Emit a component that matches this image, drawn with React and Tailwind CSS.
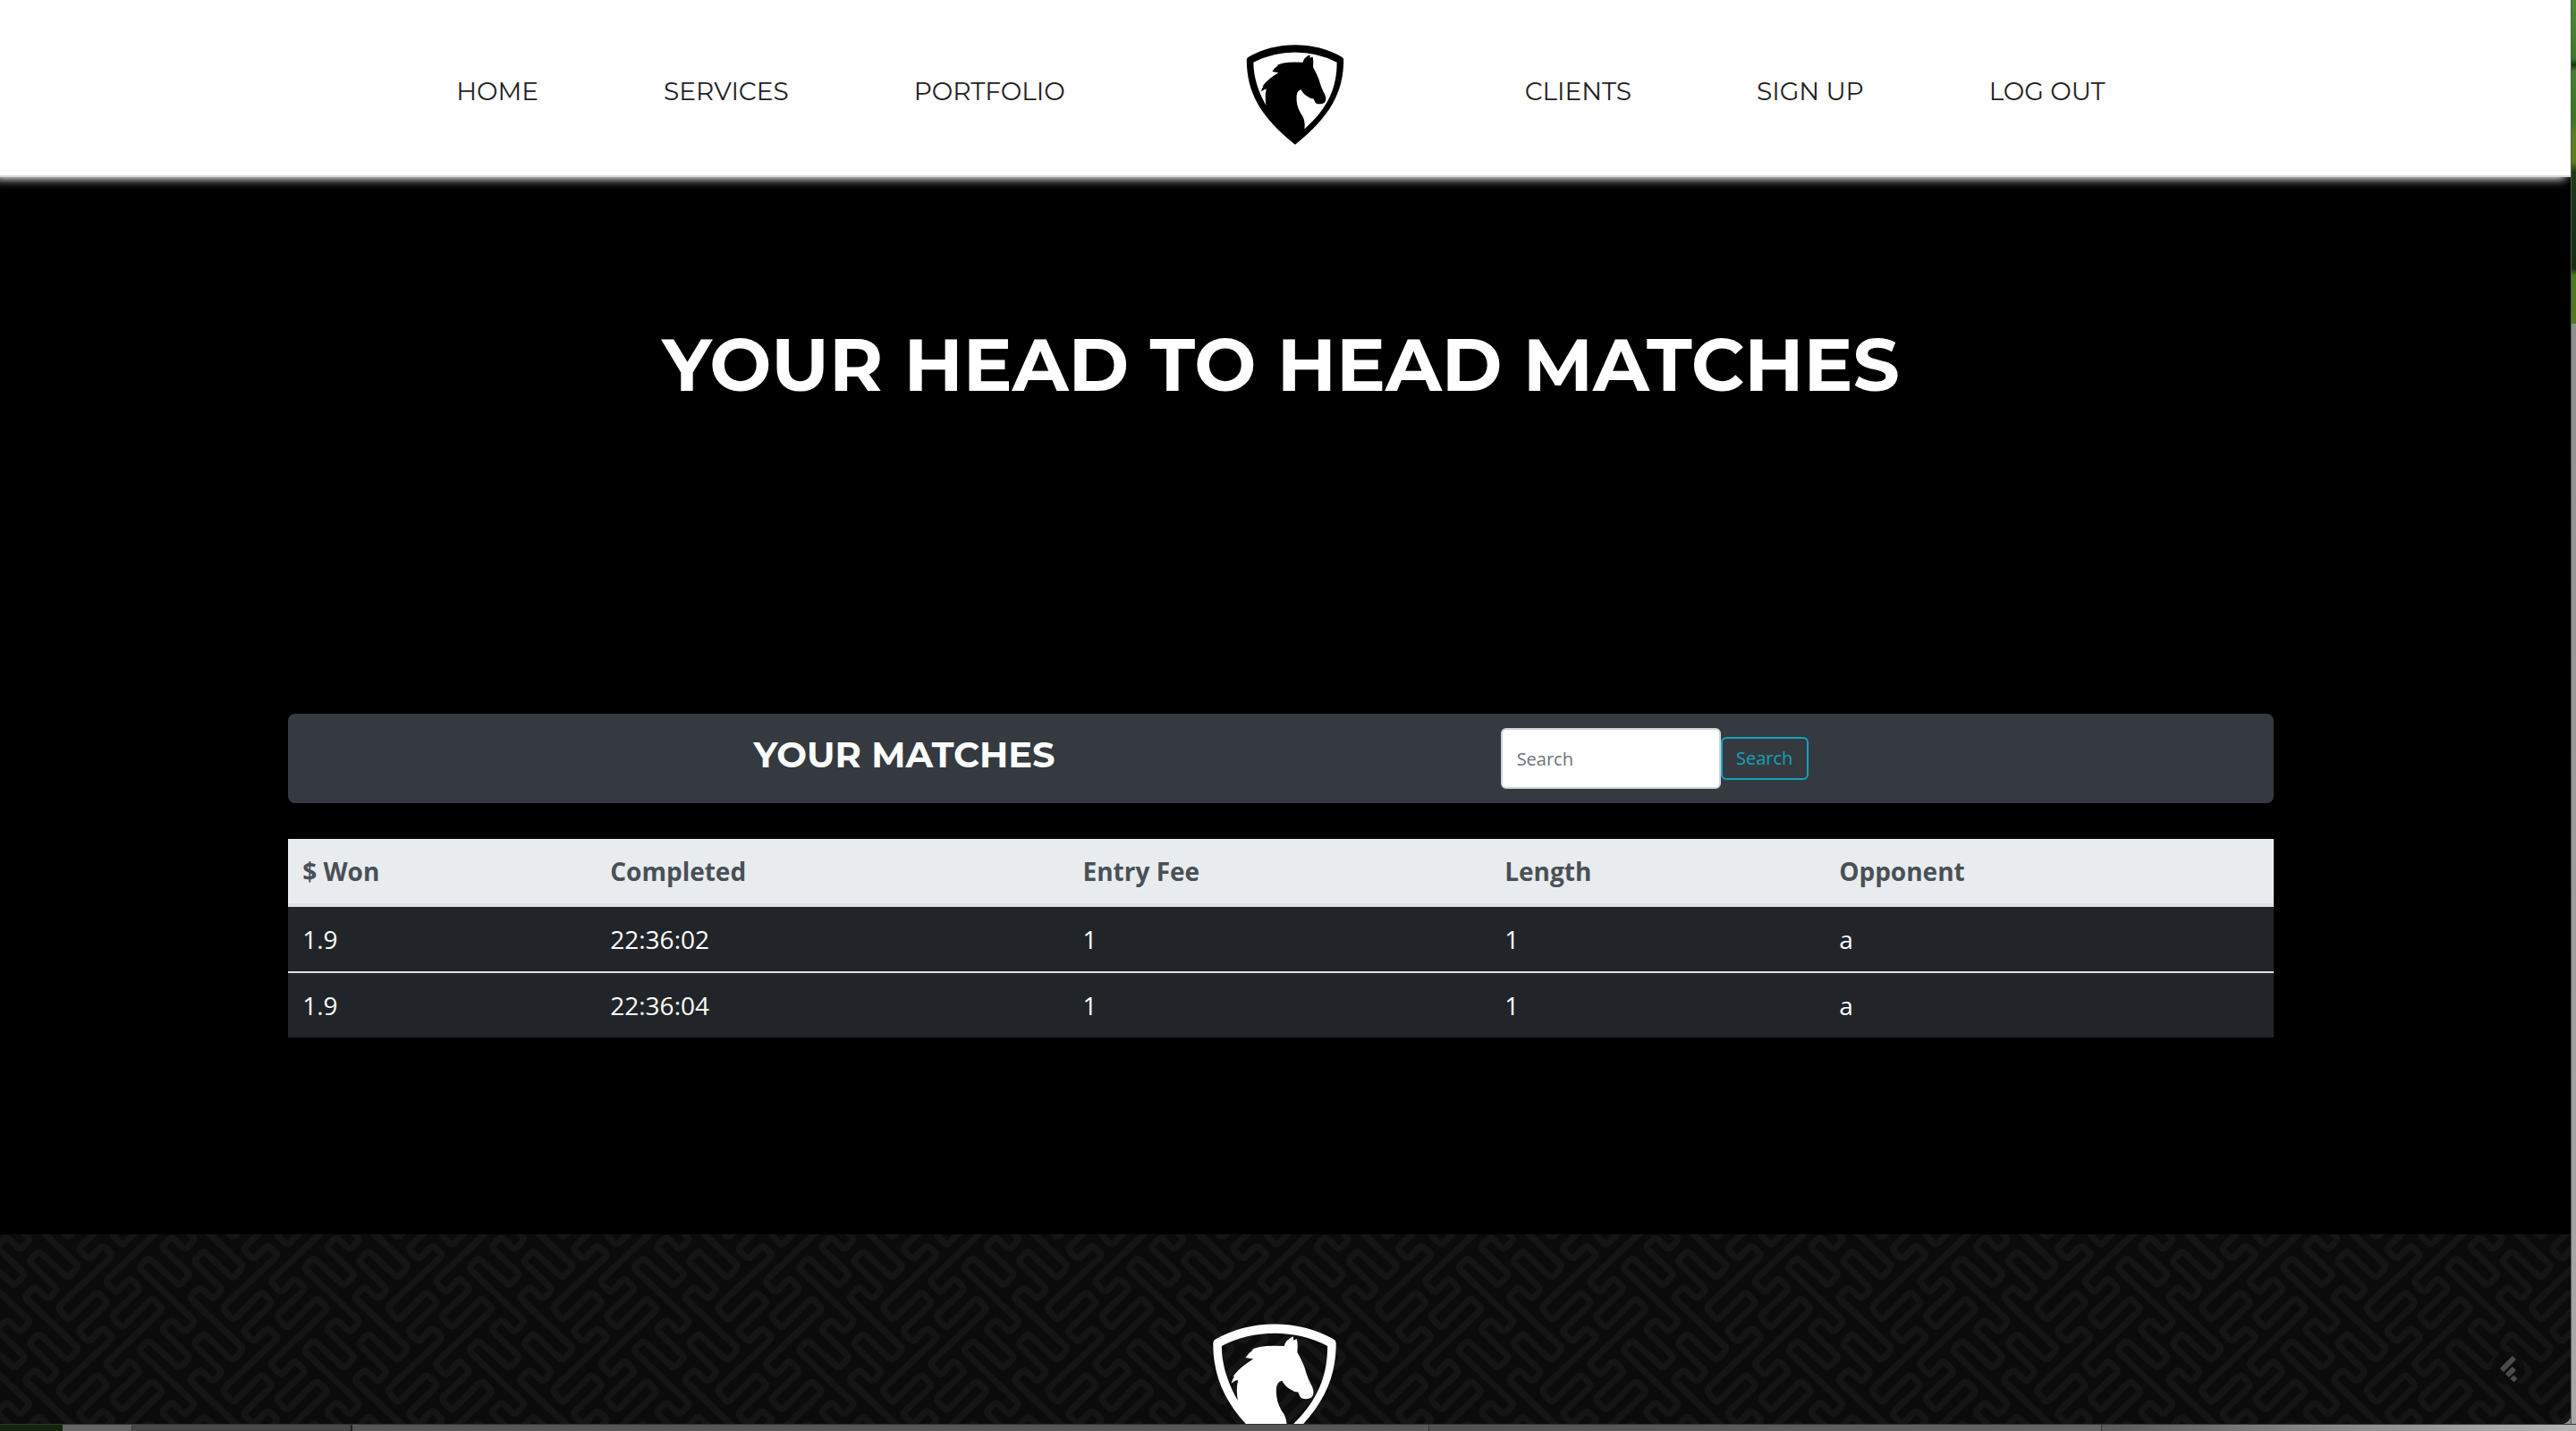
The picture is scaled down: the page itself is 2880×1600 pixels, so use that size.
import React from "react";

const LEFT_LINKS = ["HOME", "SERVICES", "PORTFOLIO"];
const RIGHT_LINKS = ["CLIENTS", "SIGN UP", "LOG OUT"];

const COLUMNS = [
  { label: "$ Won", key: "won", width: "w-[15.5%]" },
  { label: "Completed", key: "completed", width: "w-[23.8%]" },
  { label: "Entry Fee", key: "fee", width: "w-[21.25%]" },
  { label: "Length", key: "length", width: "w-[16.85%]" },
  { label: "Opponent", key: "opponent", width: "w-[22.6%]" },
];

const MATCHES = [
  { won: "1.9", completed: "22:36:02", fee: "1", length: "1", opponent: "a" },
  { won: "1.9", completed: "22:36:04", fee: "1", length: "1", opponent: "a" },
];

function HorseShield({ className }) {
  return (
    <svg viewBox="66 56 330 341" className={className} fill="currentColor" aria-hidden="true">
      <path
        fillRule="evenodd"
        d="M66 108Q66 101 72 98Q144 57 231 57Q318 57 390 98Q396 101 396 108C396 215 352 300 231 396C110 300 66 215 66 108Z
           M263 343C345 270 373 200 373 116Q307 82 231 82Q155 82 89 116C89 170 108 220 132 262Q127 232 133 207L125 209L115 216Q119 202 124 197L119 199Q134 175 174 151L153 147Q162 133 174 126L168 127Q188 112 257 116Q259 100 281 90L282 101L290 97Q294 105 292 133Q302 150 311 172Q320 205 332 225Q340 245 330 254Q318 261 303 256Q298 252 294 240Q284 240 275 233Q260 226 251 209Q238 212 236 228Q233 262 250 290Q267 310 263 343Z"
      />
    </svg>
  );
}

/* Builds a smooth path through corner points, rounding each corner. */
function roundedPath(points, radius) {
  const toward = (from, to) => {
    const length = Math.hypot(to[0] - from[0], to[1] - from[1]);
    const t = Math.min(radius, length / 2) / length;
    return [from[0] + (to[0] - from[0]) * t, from[1] + (to[1] - from[1]) * t];
  };
  let d = `M${points[0]}`;
  for (let i = 1; i < points.length - 1; i += 1) {
    d += `L${toward(points[i], points[i - 1])}Q${points[i]} ${toward(points[i], points[i + 1])}`;
  }
  return `${d}L${points[points.length - 1]}`;
}

const SNAKES = [
  [[90, -60], [264, 107], [228, 148], [130, 55], [96, 90], [193, 185], [162, 219], [117, 176], [81, 212], [264, 384]],
  [[602, 173], [498, 78], [465, 112], [655, 293], [620, 330], [576, 284], [541, 320], [638, 412], [602, 450], [550, 402]],
  [[300, 83], [345, 36], [380, 70], [193, 245], [228, 290], [326, 192], [362, 230], [262, 325], [297, 362], [345, 313], [380, 347]],
  [[510, -62], [547, -27], [353, 158], [390, 197], [435, 146], [472, 183], [373, 275], [410, 315], [510, 213], [547, 250], [450, 343]],
].map((points) => roundedPath(points, 15));

function WeavePattern() {
  return (
    <svg className="absolute inset-0 h-full w-full" aria-hidden="true">
      <defs>
        <pattern id="weave" width="553" height="277" patternUnits="userSpaceOnUse" patternTransform="scale(0.3333)">
          <rect width="553" height="277" fill="#0b0b0b" />
          <g fill="none" stroke="#151515" strokeWidth="21">
            {[-553, 0].map((x) =>
              [-277, 0, 277].map((y) => (
                <g key={`${x}:${y}`} transform={`translate(${x} ${y})`}>
                  {SNAKES.map((d) => (
                    <path key={d} d={d} />
                  ))}
                </g>
              ))
            )}
          </g>
        </pattern>
      </defs>
      <rect width="100%" height="100%" fill="url(#weave)" />
    </svg>
  );
}

function NavLink({ children }) {
  return (
    <a href="#" className="text-[28px] leading-[104px] text-[#212121]">
      {children}
    </a>
  );
}

function Header() {
  return (
    <header className="relative z-10 border-b-2 border-[#d9d9d9] bg-white shadow-[-6px_2px_10px_0_#ffffff]">
      <nav className="flex items-start justify-center gap-[202px] pt-[50px] pr-[10px] pb-[34px]">
        <div className="flex gap-[140px]">
          {LEFT_LINKS.map((label) => (
            <NavLink key={label}>{label}</NavLink>
          ))}
        </div>
        <a href="#" aria-label="Home page" className="block">
          <HorseShield className="h-[112px] w-[110px] text-black" />
        </a>
        <div className="flex gap-[140px]">
          {RIGHT_LINKS.map((label) => (
            <NavLink key={label}>{label}</NavLink>
          ))}
        </div>
      </nav>
    </header>
  );
}

function MatchesBar() {
  return (
    <div className="flex items-center justify-center gap-[498px] rounded-lg bg-[#343a40] py-4">
      <h2 className="pb-2 text-[40px] leading-[48px] font-bold text-white">YOUR MATCHES</h2>
      <form className="flex items-center font-['Open_Sans',sans-serif] text-[20px]" onSubmit={(e) => e.preventDefault()}>
        <input
          type="search"
          aria-label="Search"
          placeholder="Search"
          className="h-[68px] w-[246px] rounded-md border-2 border-[#ced4da] bg-white px-4 text-[#495057] placeholder:text-[#6c757d]"
        />
        <button type="submit" className="h-[48px] w-[98px] rounded-md border-2 border-[#17a2b8] text-[#17a2b8]">
          Search
        </button>
      </form>
    </div>
  );
}

function MatchesTable() {
  return (
    <table className="mt-10 w-full table-fixed border-collapse text-left font-['Open_Sans',sans-serif] text-[28px] leading-[40px]">
      <thead>
        <tr className="border-b-4 border-[#dee2e6] bg-[#e9ecef] text-[#495057]">
          {COLUMNS.map((column) => (
            <th key={column.key} scope="col" className={`px-4 py-4 font-bold ${column.width}`}>
              {column.label}
            </th>
          ))}
        </tr>
      </thead>
      <tbody>
        {MATCHES.map((match) => (
          <tr key={match.completed} className="border-b-2 border-[#dee2e6] bg-[#212529] font-medium text-white last:border-b-0">
            {COLUMNS.map((column) => (
              <td key={column.key} className="px-4 py-4">
                {match[column.key]}
              </td>
            ))}
          </tr>
        ))}
      </tbody>
    </table>
  );
}

function Footer() {
  return (
    <footer className="relative flex min-h-0 flex-1 items-start justify-center overflow-hidden bg-[#0b0b0b] pt-[100px] pr-6">
      <WeavePattern />
      <HorseShield className="relative h-[142px] w-[138px] shrink-0 text-white" />
      <button type="button" aria-label="Quick actions" className="absolute right-[52px] bottom-[44px] flex size-[36px] items-center justify-center rounded-full bg-[#0b0b0b]/80">
        <svg viewBox="0 0 36 36" className="size-full" stroke="#4a4a4a" strokeWidth="6" aria-hidden="true">
          <path d="M11 20L25 6M17 26L25 18M22.5 31.5L26.5 27.5" />
        </svg>
      </button>
    </footer>
  );
}

/* Slivers of the desktop that show past the browser window. */
function DesktopRight() {
  return (
    <div className="flex w-[6px] flex-col border-l border-black/40">
      <div className="h-[362px] bg-[linear-gradient(#4f8a33,#3c7a26_18%,#17300f_20%,#47802c_22%,#3b7522_36%,#5f7f1c_42%,#5f7f1c_50%,#1c3a18_53%,#182b12_83%,#4d7a20_85%,#55781f)]" />
      <div className="flex-1 bg-[linear-gradient(#8f8f8f,#a8a8a8)]" />
    </div>
  );
}

function DesktopBottom() {
  return (
    <div className="flex h-[8px] border-t border-[#333333]">
      <div className="w-[70px] bg-[#12240c]" />
      <div className="w-[78px] border-r border-[#3a3a3a] bg-[#666666]" />
      <div className="w-[246px] border-r-2 border-[#222222] bg-[#484848]" />
      <div className="w-[1204px] border-r border-[#333333] bg-[#575757]" />
      <div className="w-[752px] border-r border-[#333333] bg-[linear-gradient(90deg,#525252,#666666)]" />
      <div className="flex-1 bg-[linear-gradient(90deg,#5c5c5c,#8a8a8a_50%,#b5b5b5)]" />
    </div>
  );
}

export default function App() {
  return (
    <div className="flex h-screen flex-col overflow-hidden bg-[#8f8f8f] font-[Montserrat,Inter,sans-serif]">
      <div className="flex min-h-0 flex-1">
        <div className="flex min-w-0 flex-1 flex-col overflow-hidden rounded-br-[10px] bg-black">
          <Header />
          <main className="pt-[156px] pr-[10px] pb-[220px]">
            <h1 className="text-center text-[82px] leading-[108px] font-bold text-white">YOUR HEAD TO HEAD MATCHES</h1>
            <section className="mx-auto mt-[336px] w-[77.5%]">
              <MatchesBar />
              <MatchesTable />
            </section>
          </main>
          <Footer />
        </div>
        <DesktopRight />
      </div>
      <DesktopBottom />
    </div>
  );
}
